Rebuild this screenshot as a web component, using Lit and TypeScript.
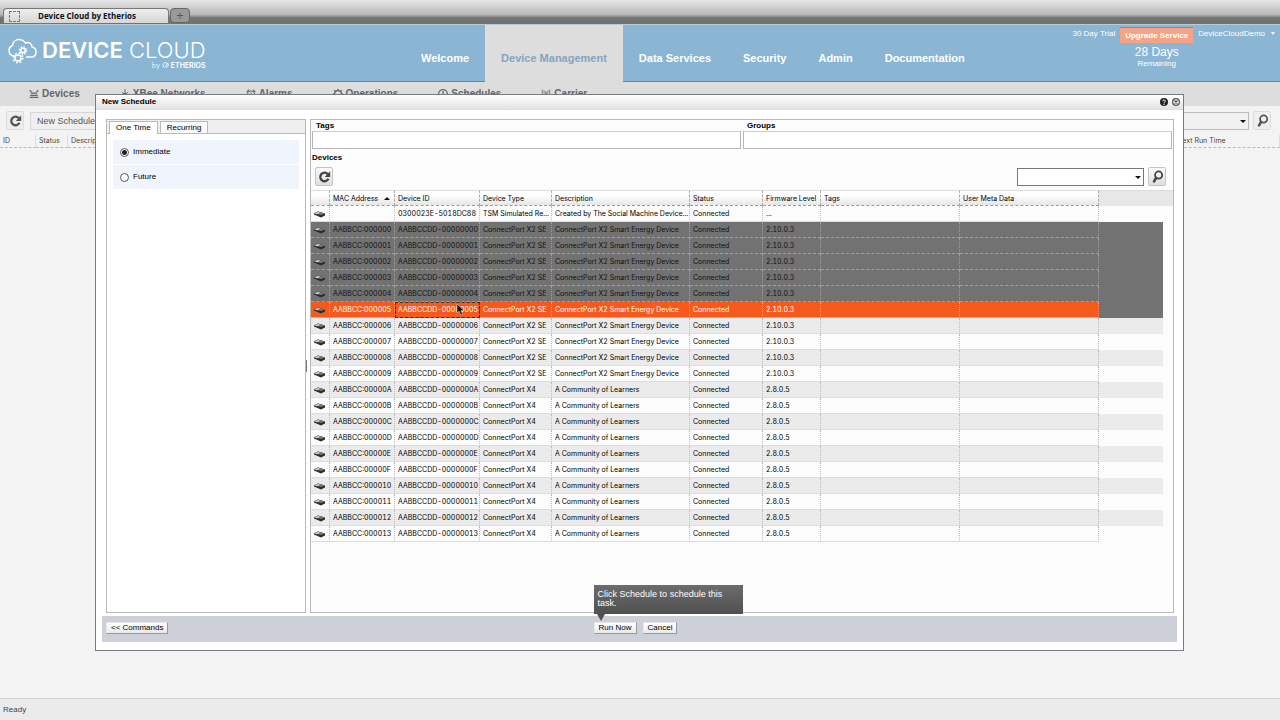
import { LitElement, html, css, svg, nothing } from 'lit';
import { customElement, property, state } from 'lit/decorators.js';
import { classMap } from 'lit/directives/class-map.js';

interface Device {
  mac: string;
  id: string;
  type: string;
  description: string;
  firmware: string;
}

const hex = (n: number, length: number) => n.toString(16).toUpperCase().padStart(length, '0');

const DEVICES: Device[] = [
  {
    mac: '',
    id: '0300023E-5018DC88',
    type: 'TSM Simulated Re...',
    description: 'Created by The Social Machine Device...',
    firmware: '...'
  },
  ...Array.from({ length: 20 }, (_, n) => ({
    mac: `AABBCC:${hex(n, 6)}`,
    id: `AABBCCDD-${hex(n, 8)}`,
    type: n < 10 ? 'ConnectPort X2 SE' : 'ConnectPort X4',
    description: n < 10 ? 'ConnectPort X2 Smart Energy Device' : 'A Community of Learners',
    firmware: n < 10 ? '2.10.0.3' : '2.8.0.5'
  }))
];

const ICONS: Record<string, unknown> = {
  refresh: svg`<path d="M12.4 5.400A5.300 5.300 0 1 0 12.900 10.800" fill="none" stroke="currentColor" stroke-width="2.800"/><path d="M15 1.500v7H8.300z" fill="currentColor"/>`,
  search: svg`<circle cx="9.400" cy="6.200" r="4.400" fill="none" stroke="currentColor" stroke-width="2.200"/><path d="M6.200 9.800L3.800 14" stroke="currentColor" stroke-width="3.200" stroke-linecap="round"/>`,
  devices: svg`<path d="M1 2l3 3M15 2l-3 3M3 6.500h10M2 10h12M1 13.500h14" fill="none" stroke="currentColor" stroke-width="2"/>`,
  xbee: svg`<path d="M8 0v15M0 9h16M3 5l10 8M13 5l-10 8" stroke="currentColor" stroke-width="1.500"/><circle cx="8" cy="9" r="3" fill="currentColor"/>`,
  alarms: svg`<circle cx="8" cy="9" r="6" fill="none" stroke="currentColor" stroke-width="1.600"/><path d="M1 5l4-4M15 5l-4-4M8 6v4h3" fill="none" stroke="currentColor" stroke-width="1.800"/>`,
  operations: svg`<circle cx="8" cy="8" r="5.500" fill="none" stroke="currentColor" stroke-width="2"/><path d="M8 0v3M0 8h3M13 8h3M2 2l3 3M14 2l-3 3" stroke="currentColor" stroke-width="2.200"/>`,
  schedules: svg`<circle cx="8" cy="8" r="7" fill="none" stroke="currentColor" stroke-width="2"/><path d="M8 3v6" stroke="currentColor" stroke-width="2"/>`,
  carrier: svg`<path d="M2 1v7M5 2v5M11 2v5M14 1v7M8 4v11M5 15l3-9 3 9" fill="none" stroke="currentColor" stroke-width="1.300"/>`
};

@customElement('dc-icon')
export class DcIcon extends LitElement {
  @property() name = '';

  static styles = css`
    :host {
      display: inline-flex;
    }

    svg {
      width: 100%;
      height: 100%;
    }
  `;

  render() {
    return html`<svg viewBox="0 0 16 16" aria-hidden="true">${ICONS[this.name]}</svg>`;
  }
}

@customElement('device-table')
export class DeviceTable extends LitElement {
  @property({ type: Array }) devices: Device[] = [];
  @property({ type: Number }) current = 6;

  static styles = css`
    :host {
      display: block;
      font: 7px/14px Inter, 'Open Sans', sans-serif;
      font-variant-numeric: tabular-nums;
      color: #000;
    }

    table {
      width: 100%;
      table-layout: fixed;
      border-spacing: 0;
    }

    th,
    td {
      box-sizing: border-box;
      height: 16px;
      padding: 1px 0 0 3px;
      border-right: 1px dotted #bbb;
      border-bottom: 1px solid #ddd;
      text-align: left;
      font-weight: 400;
      white-space: nowrap;
      overflow: hidden;
    }

    th {
      background: linear-gradient(#fff 30%, #e6e6e6);
      border-right: 1px dashed #aaa;
      border-bottom: 1px dashed #999;
      border-top: 1px solid #ddd;
      line-height: 13px;
    }

    th.filler-col,
    th.scroll-col {
      background: #e7e7e7;
      border-right: 0;
      border-bottom: 1px solid #e7e7e7;
    }

    .icon-col {
      width: 19px;
    }

    .mac-col {
      width: 65px;
    }

    .id-col {
      width: 85px;
    }

    .type-col {
      width: 72px;
    }

    .description-col {
      width: 138px;
    }

    .status-col {
      width: 73px;
    }

    .firmware-col {
      width: 58px;
    }

    .wide-col {
      width: 139px;
    }

    .scroll-col {
      width: 10px;
    }

    .sort {
      float: right;
      margin: 5px 4px 0 0;
      border: 3px solid transparent;
      border-top: 0;
      border-bottom: 3px solid #111;
    }

    .router {
      display: block;
      width: 11px;
      height: 8px;
    }

    tr.odd td {
      background: #ebebeb;
    }

    tr.selected td {
      background: #727272;
      border-color: #a0a0a0;
      border-bottom-style: dashed;
      color: #111;
    }

    tr.current td {
      background: #f6591c;
      border-color: #f9a27e;
      color: #fff;
    }

    tbody tr td.filler {
      border-right: 0;
      border-bottom: 0;
    }

    tr.current td.filler {
      background: #727272;
    }

    tbody tr td.scroll {
      background: none;
      border: 0;
    }

    tr.current td.focus {
      position: relative;
      border-right: 1px dashed #333;
      border-bottom: 1px dashed #333;
      outline: 1px dashed #333;
      outline-offset: -1px;
    }

    .cursor {
      position: absolute;
      left: 61px;
      top: 1px;
      width: 9px;
      height: 13px;
    }
  `;

  private renderRow(device: Device, index: number) {
    const classes = {
      odd: index % 2 === 1,
      selected: index > 0 && index < this.current,
      current: index === this.current
    };
    return html`
      <tr class=${classMap(classes)}>
        <td>
          <svg class="router" viewBox="0 0 11 8" aria-hidden="true">
            <path d="M0 3.500L4 1.500L11 3.500V5.500L7 7.500L0 4.500z" fill="#2c2c2c" />
            <path d="M0 3.500L4 1.500L11 3.500L7 5z" fill="#777" />
            <path d="M1 3.500L4 2L6 2.800L3 4.200z" fill="#d8d8d8" />
          </svg>
        </td>
        <td>${device.mac}</td>
        <td class=${classes.current ? 'focus' : ''}>
          ${device.id}
          ${classes.current
            ? html`<svg class="cursor" viewBox="0 0 9 13" aria-hidden="true">
                <path
                  d="M1 1V10L3.200 8.200L4.800 12L6.500 11.300L5 7.600H8z"
                  fill="#111"
                  stroke="#ddd"
                  stroke-width="0.500"
                />
              </svg>`
            : nothing}
        </td>
        <td>${device.type}</td>
        <td>${device.description}</td>
        <td>Connected</td>
        <td>${device.firmware}</td>
        <td></td>
        <td></td>
        <td class="filler"></td>
        <td class="scroll"></td>
      </tr>
    `;
  }

  render() {
    return html`
      <table aria-label="Devices">
        <thead>
          <tr>
            <th class="icon-col"></th>
            <th class="mac-col">MAC Address<span class="sort"></span></th>
            <th class="id-col">Device ID</th>
            <th class="type-col">Device Type</th>
            <th class="description-col">Description</th>
            <th class="status-col">Status</th>
            <th class="firmware-col">Firmware Level</th>
            <th class="wide-col">Tags</th>
            <th class="wide-col">User Meta Data</th>
            <th class="filler-col"></th>
            <th class="scroll-col"></th>
          </tr>
        </thead>
        <tbody>
          ${this.devices.map((device, index) => this.renderRow(device, index))}
        </tbody>
      </table>
    `;
  }
}

const controlStyles = css`
  * {
    box-sizing: border-box;
  }

  button,
  input,
  select {
    font: inherit;
    color: inherit;
    margin: 0;
    padding: 0;
    border-radius: 0;
  }

  .square {
    display: flex;
    align-items: center;
    justify-content: center;
    width: 18px;
    height: 19px;
    border: 1px solid #c4c4c4;
    border-radius: 2px;
    background: linear-gradient(#fafafa, #dedede);
    color: #444;
  }

  .square dc-icon {
    width: 13px;
    height: 13px;
  }

  .combo {
    position: relative;
    display: flex;
    width: 127px;
    height: 18px;
  }

  .combo select {
    appearance: none;
    width: 100%;
    border: 1px solid #777;
    background: #fff;
  }

  .combo::after {
    content: '';
    position: absolute;
    right: 3px;
    top: 8px;
    border: 3px solid transparent;
    border-top: 3px solid #111;
    border-bottom: 0;
  }
`;

@customElement('schedule-dialog')
export class ScheduleDialog extends LitElement {
  @state() private when = 'immediate';

  static styles = [
    controlStyles,
    css`
      :host {
        display: flex;
        flex-direction: column;
        border: 1px solid #777b80;
        background: #fff;
        color: #000;
        font: 8px/10px 'Liberation Sans', Arial, sans-serif;
      }

      .title {
        display: flex;
        align-items: center;
        gap: 4px;
        height: 15px;
        padding: 0 3px 0 6px;
        background: linear-gradient(#fff, #e2e2e2);
        border-bottom: 1px solid #ddd;
      }

      h1 {
        flex: 1;
        margin: 0;
        font-size: 8px;
      }

      .title button {
        width: 8px;
        height: 8px;
        border: 0;
        background: none;
        display: flex;
      }

      .title svg {
        width: 8px;
        height: 8px;
      }

      .body {
        flex: 1;
        display: grid;
        grid-template-columns: 200px 4px minmax(0, 1fr);
        padding: 9px 9px 3px 10px;
      }

      .pane {
        border: 1px solid #b9b9b9;
      }

      .devices {
        background: #fcfcfc;
      }

      .splitter {
        align-self: center;
        height: 12px;
        width: 1px;
        background: #777;
      }

      .tabs {
        display: flex;
        align-items: flex-end;
        gap: 2px;
        height: 14px;
        padding-left: 2px;
        background: #efefef;
        border-bottom: 1px solid #bbb;
      }

      .tabs button {
        height: 12px;
        padding: 0 6px;
        border: 1px solid #bbb;
        border-bottom: 0;
        background: #fafafa;
      }

      .tabs button[aria-selected='true'] {
        height: 13px;
        margin-bottom: -1px;
        background: #fff;
      }

      .choices {
        display: grid;
        gap: 1px;
        padding: 6px;
      }

      .choices label {
        display: flex;
        align-items: center;
        gap: 4px;
        height: 24px;
        padding-left: 7px;
        background: #f0f5fd;
      }

      .choices input {
        appearance: none;
        width: 9px;
        height: 9px;
        border: 1px solid #555;
        border-radius: 50%;
        background: #fff;
      }

      .choices input:checked {
        background: radial-gradient(circle, #222 2px, #fff 3px);
      }

      .filters {
        display: grid;
        grid-template-columns: 1fr 1fr;
        gap: 2px;
        padding: 1px;
        font-weight: 700;
      }

      .filters label {
        padding-left: 4px;
      }

      .filters span {
        display: block;
      }

      .filters input {
        display: block;
        width: calc(100% + 4px);
        height: 18px;
        margin-left: -4px;
        border: 1px solid #b5b5b5;
        border-top-color: #ccc;
        background: #fff;
      }

      h2 {
        margin: 3px 1px 4px;
        font-size: 8px;
      }

      .toolbar {
        display: flex;
        align-items: center;
        gap: 4px;
        padding: 0 7px 4px 4px;
      }

      .toolbar .combo {
        margin-left: auto;
      }

      footer {
        display: grid;
        grid-template-columns: 1fr auto 1fr;
        align-items: start;
        height: 26px;
        margin: 0 6px 8px;
        padding: 6px 12px 0 4px;
        background: #cdd0d9;
      }

      footer button {
        height: 12px;
        padding: 0 4px;
        border: 1px solid #e8e8e8;
        border-bottom-color: #999;
        border-right-color: #999;
        background: linear-gradient(#fff, #e9e9e9);
      }

      footer > button {
        justify-self: start;
      }

      .actions {
        position: relative;
        display: flex;
        gap: 6px;
      }

      .tooltip {
        position: absolute;
        left: 0;
        bottom: 20px;
        width: 149px;
        height: 29px;
        padding: 5px 4px;
        background: linear-gradient(#6c6c6c, #505050);
        color: #fff;
        font-size: 9px;
        line-height: 9px;
      }

      .tooltip::after {
        content: '';
        position: absolute;
        left: 3px;
        top: 100%;
        border: 4px solid transparent;
        border-top: 7px solid #505050;
        border-bottom: 0;
      }
    `
  ];

  private pick(event: Event) {
    this.when = (event.target as HTMLInputElement).value;
  }

  private renderChoice(value: string, label: string) {
    return html`
      <label>
        <input type="radio" name="when" value=${value} .checked=${this.when === value} @change=${this.pick} />
        ${label}
      </label>
    `;
  }

  render() {
    return html`
      <div class="title">
        <h1>New Schedule</h1>
        <button aria-label="Help">
          <svg viewBox="0 0 16 16">
            <circle cx="8" cy="8" r="8" fill="#222" />
            <path d="M5.500 6.200a2.500 2.300 0 1 1 3.700 2C8.200 8.800 8 9.200 8 10" fill="none" stroke="#fff" stroke-width="2" />
            <circle cx="8" cy="12.500" r="1.300" fill="#fff" />
          </svg>
        </button>
        <button aria-label="Close">
          <svg viewBox="0 0 16 16">
            <circle cx="8" cy="8" r="6.800" fill="#eee" stroke="#555" stroke-width="2.400" />
            <path d="M5 5l6 6M11 5l-6 6" stroke="#555" stroke-width="2.600" />
          </svg>
        </button>
      </div>
      <div class="body">
        <section class="pane">
          <div class="tabs" role="tablist">
            <button role="tab" aria-selected="true">One Time</button>
            <button role="tab" aria-selected="false">Recurring</button>
          </div>
          <div class="choices">
            ${this.renderChoice('immediate', 'Immediate')} ${this.renderChoice('future', 'Future')}
          </div>
        </section>
        <div class="splitter"></div>
        <section class="pane devices">
          <div class="filters">
            <label><span>Tags</span><input type="text" /></label>
            <label><span>Groups</span><input type="text" /></label>
          </div>
          <h2>Devices</h2>
          <div class="toolbar">
            <button class="square" aria-label="Refresh"><dc-icon name="refresh"></dc-icon></button>
            <label class="combo"><select aria-label="Search devices"></select></label>
            <button class="square" aria-label="Search"><dc-icon name="search"></dc-icon></button>
          </div>
          <device-table .devices=${DEVICES}></device-table>
        </section>
      </div>
      <footer>
        <button>&lt;&lt; Commands</button>
        <div class="actions">
          <button aria-describedby="hint">Run Now</button>
          <button>Cancel</button>
          <div class="tooltip" id="hint" role="tooltip">Click Schedule to schedule this task.</div>
        </div>
      </footer>
    `;
  }
}

@customElement('app-root')
export class AppRoot extends LitElement {
  static styles = [
    controlStyles,
    css`
      :host {
        display: flex;
        flex-direction: column;
        position: relative;
        min-height: 100vh;
        background: #f3f3f3;
        color: #444;
        font: 8px/10px 'Liberation Sans', Arial, sans-serif;
      }

      .browser {
        display: flex;
        align-items: flex-end;
        gap: 1px;
        height: 25px;
        padding: 0 3px 1px;
        background: linear-gradient(#e6e6e6, #b9b9b9 60%, #727272 75%, #727272);
        border-bottom: 1px solid #b9cbd6;
      }

      .browser-tab {
        display: flex;
        align-items: center;
        width: 166px;
        height: 15px;
        padding: 0 5px;
        border: 1px solid #777;
        border-bottom: 0;
        border-radius: 4px 4px 0 0;
        background: linear-gradient(#eee, #d6d6d6);
        color: #111;
        font: 700 8px/10px 'Open Sans', sans-serif;
      }

      .browser-tab::before {
        content: '';
        width: 9px;
        height: 9px;
        border: 1px dashed #777;
      }

      .browser-tab span {
        flex: 1;
        padding-right: 9px;
        text-align: center;
      }

      .new-tab {
        width: 20px;
        height: 15px;
        border: 1px solid #666;
        border-radius: 4px;
        background: #999;
        color: #555;
        font-size: 12px;
        line-height: 10px;
      }

      header {
        display: flex;
        height: 57px;
        background: #8ab6d3;
        border-bottom: 1px solid #6a8494;
        color: #fff;
      }

      .logo {
        display: flex;
        gap: 5px;
        width: 405px;
        padding: 13px 0 0 7px;
      }

      .logo > svg {
        width: 30px;
        height: 27px;
      }

      .brand {
        display: flex;
        flex-direction: column;
        align-items: flex-end;
        font: 300 21px/24px Inter, sans-serif;
        font-size: 22px;
        white-space: nowrap;
      }

      .brand b {
        font-weight: 600;
      }

      .byline {
        display: flex;
        align-items: center;
        gap: 2px;
        font-size: 7px;
        line-height: 7px;
      }

      .byline svg {
        width: 7px;
        height: 7px;
      }

      .primary {
        display: flex;
        font-size: 11px;
        font-weight: 700;
      }

      .primary a {
        display: flex;
        align-items: center;
        height: 57px;
        padding: 8px 16px 0;
        color: #fff;
        text-decoration: none;
        white-space: nowrap;
      }

      .primary a.active {
        background: #ddd;
        color: #86a4bf;
      }

      .account {
        display: grid;
        grid-template-columns: auto auto auto;
        column-gap: 5px;
        align-content: start;
        margin-left: auto;
        padding: 2px 5px 0 0;
        white-space: nowrap;
      }

      .account > span {
        padding-top: 2px;
      }

      .upgrade {
        height: 16px;
        padding: 0 5px;
        border: 0;
        border-top: 1px solid #a08078;
        background: #f3a486;
        font-weight: 700;
      }

      .user {
        padding-top: 2px;
        color: #fff;
        text-decoration: none;
      }

      .user::after {
        content: '';
        display: inline-block;
        margin-left: 6px;
        border: 2px solid transparent;
        border-top: 3px solid #fff;
        border-bottom: 0;
        vertical-align: 1px;
      }

      .remaining {
        grid-column: 2;
        padding-top: 3px;
        text-align: center;
        line-height: 10px;
      }

      .remaining strong {
        display: block;
        font-size: 12px;
        line-height: 13px;
        font-weight: 400;
      }

      .secondary {
        display: flex;
        gap: 40px;
        height: 24px;
        padding: 0 29px;
        background: #ddd;
        font-size: 10px;
        font-weight: 700;
      }

      .secondary a {
        display: flex;
        align-items: center;
        gap: 3px;
        color: #666;
        text-decoration: none;
        white-space: nowrap;
      }

      .secondary dc-icon {
        width: 10px;
        height: 10px;
      }

      .page-tools {
        display: flex;
        align-items: center;
        gap: 4px;
        padding: 5px 9px 5px 6px;
      }

      .page-tools .square {
        border-color: #ddd;
        background: #eee;
        color: #555;
      }

      .page-tools .combo {
        margin-left: auto;
      }

      .page-tools select {
        border-color: #bbb;
        background: #f1f1f1;
      }

      .schedule {
        height: 18px;
        margin-left: 2px;
        padding: 0 6px;
        border: 1px solid #d6d6d6;
        background: #efefef;
        color: #555;
        font-size: 9px;
      }

      .page-table {
        width: 100%;
        table-layout: fixed;
        border-spacing: 0;
        font: 7px/12px Inter, 'Open Sans', sans-serif;
      }

      .page-table th {
        height: 13px;
        padding: 0 0 0 3px;
        border-right: 1px solid #ddd;
        border-bottom: 1px dashed #bbb;
        text-align: left;
        font-weight: 400;
      }

      .id {
        width: 36px;
      }

      .status {
        width: 32px;
      }

      .next-run {
        width: 106px;
      }

      .status-bar {
        display: flex;
        align-items: center;
        height: 22px;
        margin-top: auto;
        padding-left: 3px;
        border-top: 1px solid #d2d2d2;
        background: #ebebeb;
      }

      schedule-dialog {
        position: absolute;
        inset: 94px 96px 69px 95px;
      }
    `
  ];

  private renderLink(icon: string, label: string) {
    return html`<a href="#"><dc-icon name=${icon}></dc-icon>${label}</a>`;
  }

  render() {
    return html`
      <div class="browser">
        <div class="browser-tab"><span>Device Cloud by Etherios</span></div>
        <button class="new-tab" aria-label="New tab">+</button>
      </div>
      <header>
        <div class="logo">
          <svg viewBox="0 0 30 27" fill="none" stroke="#fff" stroke-width="1.500" aria-hidden="true">
            <path d="M8 18H6.500A5.500 5.500 0 0 1 5.500 7.500C6 3.500 9 1.500 12 1.500C15 1.500 17 3 18.500 5C22 3.500 25 5.500 25 9C27.500 9.500 29 11.300 29 14C29 17 27 19 24 19H19" />
            <circle cx="11" cy="20" r="3" />
            <circle cx="11" cy="20" r="4.800" stroke-dasharray="1.900 1.870" />
            <circle cx="16" cy="12.500" r="2.200" />
            <circle cx="16" cy="12.500" r="3.600" stroke-dasharray="1.400 1.430" />
          </svg>
          <div class="brand">
            <span><b>DEVICE</b> CLOUD</span>
            <span class="byline">
              by
              <svg viewBox="0 0 8 8" fill="none" stroke="#fff" aria-hidden="true">
                <path d="M3 6.500A3 3 0 1 1 7 4.500C6 7 3.500 6 4 4.500S6.500 3 7 1" />
              </svg>
              <b>ETHERIOS</b>
            </span>
          </div>
        </div>
        <nav class="primary">
          <a href="#">Welcome</a>
          <a href="#" class="active">Device Management</a>
          <a href="#">Data Services</a>
          <a href="#">Security</a>
          <a href="#">Admin</a>
          <a href="#">Documentation</a>
        </nav>
        <div class="account">
          <span>30 Day Trial</span>
          <button class="upgrade">Upgrade Service</button>
          <a class="user" href="#">DeviceCloudDemo</a>
          <div class="remaining"><strong>28 Days</strong>Remaining</div>
        </div>
      </header>
      <nav class="secondary">
        ${this.renderLink('devices', 'Devices')} ${this.renderLink('xbee', 'XBee Networks')}
        ${this.renderLink('alarms', 'Alarms')} ${this.renderLink('operations', 'Operations')}
        ${this.renderLink('schedules', 'Schedules')} ${this.renderLink('carrier', 'Carrier')}
      </nav>
      <div class="page-tools">
        <button class="square" aria-label="Refresh"><dc-icon name="refresh"></dc-icon></button>
        <button class="schedule">New Schedule</button>
        <label class="combo"><select aria-label="Search schedules"></select></label>
        <button class="square" aria-label="Search"><dc-icon name="search"></dc-icon></button>
      </div>
      <table class="page-table" aria-label="Schedules">
        <thead>
          <tr>
            <th class="id">ID</th>
            <th class="status">Status</th>
            <th>Description</th>
            <th class="next-run">Next Run Time</th>
          </tr>
        </thead>
      </table>
      <div class="status-bar">Ready</div>
      <schedule-dialog role="dialog" aria-label="New Schedule"></schedule-dialog>
    `;
  }
}
